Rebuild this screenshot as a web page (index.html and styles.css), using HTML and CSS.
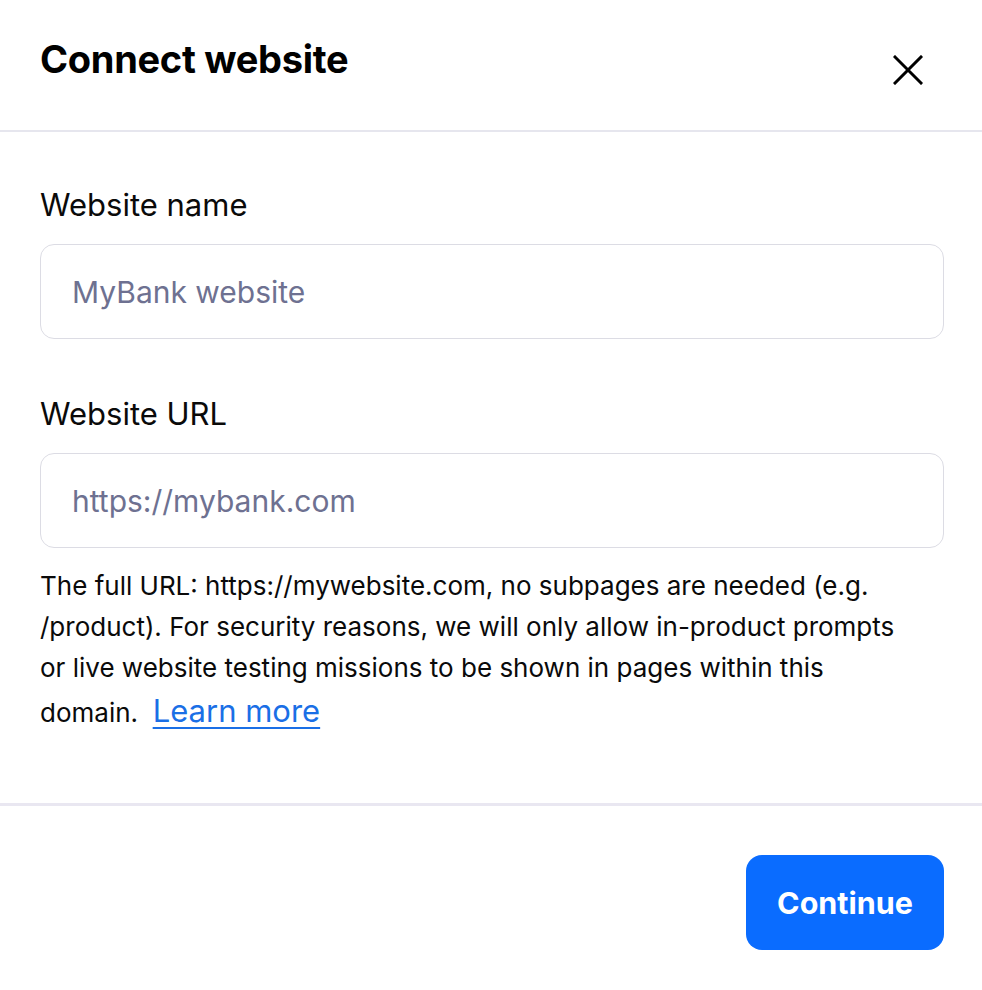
FILE: index.html
```html
<!DOCTYPE html>
<html lang="en">
<head>
<meta charset="utf-8">
<title>Connect website</title>
<link rel="stylesheet" href="styles.css">
</head>
<body>
<div class="modal">
  <header class="modal-header">
    <h1 class="modal-title">Connect website</h1>
    <button class="close-btn" aria-label="Close">
      <svg width="30" height="30" viewBox="0 0 30 30" fill="none" stroke="#000" stroke-width="3" stroke-linecap="square">
        <path d="M2 2 L28 28 M28 2 L2 28"/>
      </svg>
    </button>
  </header>
  <div class="modal-body">
    <label class="field-label" for="name">Website name</label>
    <input class="field-input" id="name" type="text" placeholder="MyBank website">
    <label class="field-label second" for="url">Website URL</label>
    <input class="field-input" id="url" type="text" placeholder="https://mybank.com">
    <p class="help-text">The full URL: https://mywebsite.com, no subpages are needed (e.g. /product). For security reasons, we will only allow in-product prompts or live website testing missions to be shown in pages within this domain.&nbsp; <a class="learn-more" href="#">Learn more</a></p>
  </div>
  <footer class="modal-footer">
    <button class="primary-btn">Continue</button>
  </footer>
</div>
</body>
</html>
```
FILE: styles.css
```css
* { box-sizing: border-box; }
html, body { margin: 0; padding: 0; background: #fff; }
body { font-family: "Inter", "Lato", sans-serif; color: #0a0a0a; }

.modal { width: 982px; min-height: 990px; display: flex; flex-direction: column; }

.modal-header {
  height: 132px;
  padding: 0 40px;
  display: flex;
  justify-content: space-between;
  align-items: flex-start;
  border-bottom: 2px solid #e6e6ee;
}
.modal-title {
  margin: 36px 0 0;
  font-size: 38px;
  line-height: 46px;
  font-weight: 700;
  letter-spacing: -0.3px;
  color: #000;
}
.close-btn {
  margin: 55px 19px 0 0;
  padding: 0;
  border: 0;
  background: none;
  width: 30px;
  height: 30px;
  display: flex;
}

.modal-body {
  padding: 55px 38px 0 40px;
  display: flex;
  flex-direction: column;
}
.field-label {
  font-size: 31px;
  line-height: 36px;
  color: #0a0a0a;
}
.field-label.second { margin-top: 57px; }
.field-input {
  margin-top: 21px;
  height: 95px;
  width: 100%;
  border: 1.5px solid #dcdce4;
  border-radius: 14px;
  padding: 0 31px;
  font-family: inherit;
  font-size: 30px;
  color: #0a0a0a;
  background: #fff;
  outline: none;
}
.field-input::placeholder { color: #6e7191; }

.help-text {
  margin: 17px 0 0;
  max-width: 875px;
  font-size: 26px;
  line-height: 41px;
  color: #0a0a0a;
}
.learn-more {
  display: inline-block;
  margin-top: 4px;
  font-size: 31px;
  line-height: 37px;
  color: #1a6fe6;
  text-decoration: underline;
  text-underline-offset: 5px;
  text-decoration-thickness: 2px;
}

.modal-footer {
  margin-top: 70px;
  border-top: 3px solid #e9e7f1;
  padding: 49px 38px 0 40px;
  display: flex;
  justify-content: flex-end;
}
.primary-btn {
  width: 198px;
  height: 95px;
  border: 0;
  border-radius: 16px;
  background: #0a6cff;
  color: #fff;
  font-family: inherit;
  font-size: 30.5px;
  font-weight: 700;
}
```
